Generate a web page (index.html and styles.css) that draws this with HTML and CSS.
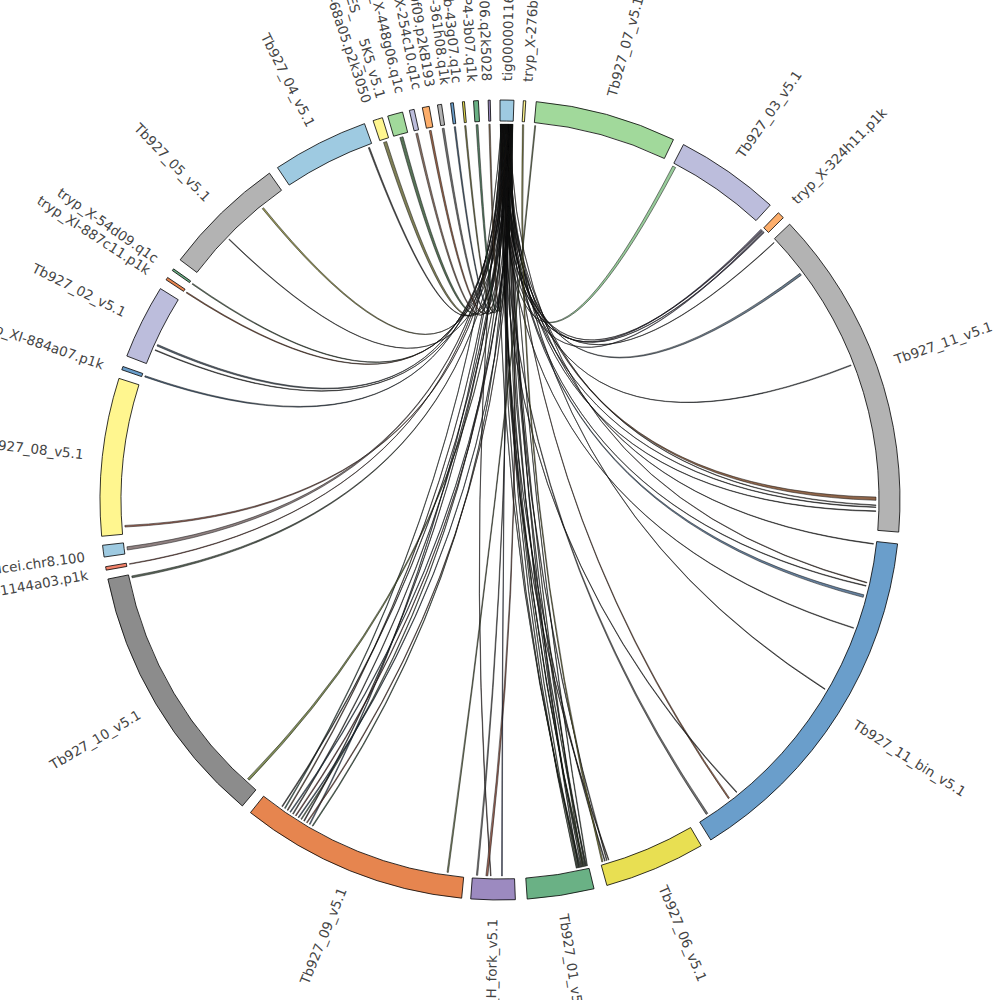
FILE: index.html
```html
<!DOCTYPE html>
<html lang="en">
<head>
<meta charset="utf-8">
<title>Circos</title>
<link rel="stylesheet" href="styles.css">
</head>
<body>
<div class="canvas">
  <svg id="circos" class="circos" width="1000" height="1000" viewBox="0 0 1000 1000" xmlns="http://www.w3.org/2000/svg"></svg>
</div>
<script src="script.js"></script>
</body>
</html>
```

FILE: styles.css
```css
html, body {
  margin: 0;
  padding: 0;
  background: #ffffff;
}
.canvas {
  width: 1000px;
  height: 1000px;
  overflow: hidden;
  background: #ffffff;
}
.circos {
  display: block;
}
.seg {
  stroke: #000000;
  stroke-width: 0.8;
  stroke-linejoin: miter;
}
.chord {
  stroke: #0d0d0d;
  stroke-width: 0.5;
  fill-opacity: 0.85;
}
.label {
  font-family: "DejaVu Sans", "Liberation Sans", sans-serif;
  font-size: 13.5px;
  fill: #444444;
}
```

FILE: script.js
```js
(function () {
  var NS = 'http://www.w3.org/2000/svg';
  var CX = 500, CY = 500, RO = 400, RI = 379, RC = 376, RL = 419;

  var segs = [
    { name: 'tig00000116', a0: 0, a1: 2.0, fill: '#9ecae1', la: 1.0 },
    { name: 'tryp_X-276b12.q1k', a0: 3.35, a1: 3.7, fill: '#fff68f', la: 3.8 },
    { name: 'Tb927_07_v5.1', a0: 5.2, a1: 25.7, fill: '#a1d99b' },
    { name: 'Tb927_03_v5.1', a0: 27.3, a1: 42.5, fill: '#bcbddc' },
    { name: 'tryp_X-324h11.p1k', a0: 44.1, a1: 45.1, fill: '#fdae6b', la: 44.6 },
    { name: 'Tb927_11_v5.1', a0: 46.4, a1: 94.6, fill: '#b3b3b3' },
    { name: 'Tb927_11_bin_v5.1', a0: 96.3, a1: 148.2, fill: '#6a9ecb' },
    { name: 'Tb927_06_v5.1', a0: 149.8, a1: 164.5, fill: '#e8df52' },
    { name: 'Tb927_01_v5.1', a0: 166.4, a1: 176.1, fill: '#6ab185' },
    { name: 'Tb927_BES_H_fork_v5.1', a0: 177.8, a1: 184.2, fill: '#9c8ac0' },
    { name: 'Tb927_09_v5.1', a0: 185.5, a1: 218.6, fill: '#e6854f' },
    { name: 'Tb927_10_v5.1', a0: 220.1, a1: 258.6, fill: '#8c8c8c' },
    { name: 'tryp_XI-1144a03.p1k', a0: 259.9, a1: 260.4, fill: '#f4836b', la: 259.7 },
    { name: 'T.brucei.chr8.100', a0: 261.8, a1: 263.5, fill: '#9ecae1', la: 262.2 },
    { name: 'Tb927_08_v5.1', a0: 264.8, a1: 287.7, fill: '#fff68f' },
    { name: 'tryp_XI-884a07.p1k', a0: 289.0, a1: 289.5, fill: '#6a9ecb', la: 288.8 },
    { name: 'Tb927_02_v5.1', a0: 291.1, a1: 301.9, fill: '#bcbddc' },
    { name: 'tryp_XI-887c11.p1k', a0: 303.4, a1: 303.8, fill: '#e6854f', la: 303.1 },
    { name: 'tryp_X-54d09.q1c', a0: 305.0, a1: 305.3, fill: '#6ab185', la: 305.0 },
    { name: 'Tb927_05_v5.1', a0: 306.9, a1: 324.8, fill: '#b3b3b3' },
    { name: 'Tb927_04_v5.1', a0: 326.2, a1: 340.2, fill: '#9ecae1' },
    { name: 'tryp_Xb-68a05.p2k3050', a0: 341.5, a1: 342.9, fill: '#fff68f', la: 341.5 },
    { name: 'Tb927_BES_\u2003\u20025K5_v5.1', a0: 343.7, a1: 345.9, fill: '#a1d99b', la: 343.5 },
    { name: 'tryp_X-448g06.q1c', a0: 346.9, a1: 347.6, fill: '#bcbddc', la: 346.2 },
    { name: 'tryp_X-254c10.q1c', a0: 348.8, a1: 349.8, fill: '#fdae6b', la: 348.6 },
    { name: 'tryp_X-20f09.p2kB193', a0: 351.0, a1: 351.6, fill: '#b3b3b3', la: 350.4 },
    { name: 'tryp_Xl-361h08.q1k', a0: 352.9, a1: 353.3, fill: '#6a9ecb', la: 352.5 },
    { name: 'tryp_Xb-43g07.q1c', a0: 354.6, a1: 354.9, fill: '#e8df52', la: 354.1 },
    { name: 'tryp_XIP4-3b07.q1k', a0: 356.2, a1: 356.9, fill: '#6ab185', la: 356.2 },
    { name: 'tryp_X-39g06.q2k5028', a0: 358.3, a1: 358.6, fill: '#9c8ac0', la: 358.2 }
  ];

  // chords from tig00000116: [target angle, target width (deg), fill]
  var chords = [
    [27.6, 0.5, '#86c38a'],
    [44.0, 0.12, '#7b6fa6'], [44.2, 0.1, '#54486e'], [44.4, 0.1, '#8f86b8'], [44.6, 0.1, '#3c3458'],
    [46.8, 0.08, '#333333'],
    [53.1, 0.35, '#4f6478'],
    [69.0, 0.12, '#2b3a48'],
    [89.8, 0.5, '#7a4a2a'], [90.8, 0.1, '#333333'], [91.1, 0.1, '#333333'], [91.7, 0.1, '#2a2a2a'],
    [96.7, 0.1, '#333333'],
    [102.7, 0.1, '#5a3a2a'], [103.2, 0.1, '#333333'], [104.8, 0.4, '#4a6a8c'],
    [109.9, 0.1, '#333333'], [120.2, 0.1, '#333333'], [141.0, 0.12, '#333333'],
    [142.5, 0.2, '#8a4a2a'], [146.6, 0.3, '#5a5a5a'],
    [163.2, 0.1, '#4a3a2a'], [163.5, 0.1, '#333333'], [163.8, 0.12, '#333333'],
    [179.7, 0.12, '#3a4a8a'], [181.4, 0.1, '#5a3a3a'], [182.0, 0.3, '#8a4a3a'], [183.5, 0.2, '#6a6a6a'],
    [222.0, 0.35, '#6a7a3a'],
    [258.2, 0.3, '#3a4a3a'],
    [260.2, 0.1, '#a04a3a'],
    [262.6, 0.5, '#7a6a6a'],
    [266.0, 0.25, '#8a4a3a'],
    [289.2, 0.2, '#2a4a6a'],
    [293.5, 0.12, '#333333'], [294.3, 0.25, '#3a4a5a'],
    [303.5, 0.15, '#8a4a2a'], [305.1, 0.15, '#4a6a4a'],
    [313.9, 0.1, '#333333'], [320.9, 0.25, '#8a8a3a'],
    [339.6, 0.2, '#333333'],
    [342.2, 0.5, '#6a6a3a'], [344.8, 0.5, '#3a5a3a'], [347.2, 0.3, '#7a5a4a'],
    [349.3, 0.3, '#8a4a2a'], [351.3, 0.3, '#5a5a5a'], [353.1, 0.2, '#2a4a6a'],
    [354.7, 0.2, '#6a6a2a'], [356.5, 0.3, '#3a6a4a'], [358.4, 0.2, '#7a5a3a']
  ];
  var darkGreens = ['#2f4a35', '#3d5a3a', '#263826', '#4a6a3a', '#334433', '#5a6a2a', '#2a3a2a', '#3a5a4a', '#4a5a3a', '#203020', '#5a7a4a', '#304830'];
  for (var i = 0; i < 12; i++) {
    chords.push([166.6 + i * 0.15, 0.1, darkGreens[i]]);
  }
  var mixed = ['#3a6a4a', '#4a6a8c', '#8a4a3a', '#333333', '#5a7a5a', '#2a4a6a', '#7a3a3a', '#4a4a4a', '#3a5a7a', '#6a4a3a', '#4a7a6a', '#333333'];
  for (var j = 0; j < 12; j++) {
    chords.push([209.9 + j * 0.5, 0.14, mixed[j]]);
  }

  var seed = 12345;
  function rnd() {
    seed = (seed * 1103515245 + 12345) & 0x7fffffff;
    return seed / 0x7fffffff;
  }

  function pt(a, r) {
    var t = a * Math.PI / 180;
    return [CX + r * Math.sin(t), CY - r * Math.cos(t)];
  }
  function f(p) { return p[0].toFixed(2) + ' ' + p[1].toFixed(2); }
  function el(tag, attrs, parent) {
    var e = document.createElementNS(NS, tag);
    for (var k in attrs) e.setAttribute(k, attrs[k]);
    parent.appendChild(e);
    return e;
  }

  var svg = document.getElementById('circos');
  var gC = el('g', { 'class': 'chords' }, svg);
  var gS = el('g', { 'class': 'ideogram' }, svg);
  var gL = el('g', { 'class': 'labels' }, svg);

  function control(sa, ta) {
    var d = ((ta - sa) % 360 + 360) % 360;
    var mid, dist;
    if (d <= 180) { mid = sa + d / 2; dist = d; } else { mid = sa - (360 - d) / 2; dist = 360 - d; }
    var k = (rnd() * 2 - 1) * 38 * (dist / 180);
    var p = pt(mid, k);
    return p;
  }

  function ribbon(s0, s1, t0, t1, color) {
    var c = control((s0 + s1) / 2, (t0 + t1) / 2);
    var cs = c[0].toFixed(2) + ' ' + c[1].toFixed(2);
    var d = 'M' + f(pt(s0, RC)) +
      ' A' + RC + ' ' + RC + ' 0 0 1 ' + f(pt(s1, RC)) +
      ' Q' + cs + ' ' + f(pt(t0, RC)) +
      ' A' + RC + ' ' + RC + ' 0 0 1 ' + f(pt(t1, RC)) +
      ' Q' + cs + ' ' + f(pt(s0, RC)) + ' Z';
    el('path', { 'class': 'chord', d: d, fill: color }, gC);
  }

  // mixed source order on tig00000116
  var order = chords.map(function (c, idx) { return idx; });
  for (var m = order.length - 1; m > 0; m--) {
    var r = Math.floor(rnd() * (m + 1));
    var tmp = order[m]; order[m] = order[r]; order[r] = tmp;
  }
  var n = chords.length;
  var w = 1.92 / n;
  order.forEach(function (ci, idx) {
    var c = chords[ci];
    var s0 = 0.04 + idx * w;
    var s1 = s0 + w * 0.8;
    ribbon(s0, s1, c[0] - c[1] / 2, c[0] + c[1] / 2, c[2]);
  });
  ribbon(3.42, 3.62, 164.1, 164.3, '#7a7a2a');
  ribbon(5.3, 5.45, 187.9, 188.1, '#6a7a4a');

  segs.forEach(function (s) {
    var large = (s.a1 - s.a0) > 180 ? 1 : 0;
    var d = 'M' + f(pt(s.a0, RO)) +
      ' A' + RO + ' ' + RO + ' 0 ' + large + ' 1 ' + f(pt(s.a1, RO)) +
      ' L' + f(pt(s.a1, RI)) +
      ' A' + RI + ' ' + RI + ' 0 ' + large + ' 0 ' + f(pt(s.a0, RI)) + ' Z';
    el('path', { 'class': 'seg', d: d, fill: s.fill }, gS);

    var la = (s.la !== undefined) ? s.la : (s.a0 + s.a1) / 2;
    var norm = ((la % 360) + 360) % 360;
    var p = pt(norm, RL);
    var t = el('text', { 'class': 'label', dy: '0.35em' }, gL);
    var rot, anchor;
    if (norm < 180) { rot = norm - 90; anchor = 'start'; }
    else { rot = norm + 90; anchor = 'end'; }
    t.setAttribute('transform', 'translate(' + p[0].toFixed(2) + ' ' + p[1].toFixed(2) + ') rotate(' + rot.toFixed(2) + ')');
    t.setAttribute('text-anchor', anchor);
    t.textContent = s.name;
  });
})();
```
